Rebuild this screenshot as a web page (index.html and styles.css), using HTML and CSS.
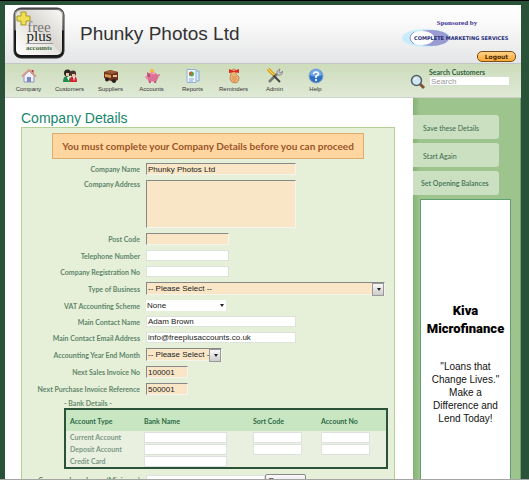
FILE: index.html
```html
<!DOCTYPE html>
<html lang="en">
<head>
<meta charset="utf-8">
<title>Phunky Photos Ltd - Company Details</title>
<link rel="stylesheet" href="styles.css">
</head>
<body>
<div class="page">
  <header class="header">
    <svg class="logo" viewBox="0 0 52 52" role="img" aria-label="free plus accounts">
      <defs>
        <linearGradient id="rim" x1="0" y1="0" x2="0" y2="1"><stop offset="0" stop-color="#555"/><stop offset=".1" stop-color="#aaa"/><stop offset=".44" stop-color="#777"/><stop offset=".46" stop-color="#111"/><stop offset="1" stop-color="#1a1a1a"/></linearGradient>
        <linearGradient id="face" x1="0" y1="1" x2="1" y2="0"><stop offset="0" stop-color="#fff"/><stop offset=".5" stop-color="#e6e4df"/><stop offset=".52" stop-color="#d8d5cf"/><stop offset="1" stop-color="#f8f8f6"/></linearGradient>
      </defs>
      <rect x="1" y="1" width="50" height="50" rx="7" fill="url(#rim)" stroke="#333"/>
      <rect x="3" y="3" width="46" height="45" rx="5" fill="url(#face)"/>
      <path d="M8 5h5v4h4v5h-4v4H8v-4H4V9h4z" fill="#f0df55" stroke="#a89a28"/>
      <text x="26" y="25" text-anchor="middle" font-size="15" fill="#777">free</text>
      <text x="26" y="34" text-anchor="middle" font-size="15" fill="#222">plus</text>
      <path d="M13 36.500h27" stroke="#999"/>
      <text x="26" y="43" text-anchor="middle" font-size="7" font-weight="bold" fill="#3f6a3a">accounts</text>
    </svg>
    <h1 class="company">Phunky Photos Ltd</h1>
    <div class="sponsor">
      <p class="sponsored">Sponsored by</p>
      <svg class="cms" viewBox="0 0 114 20" role="img" aria-label="Complete Marketing Services">
        <ellipse cx="24" cy="10" rx="24" ry="9" fill="#c9ecfb"/>
        <ellipse cx="29" cy="10" rx="18" ry="8" fill="#9a9bd0"/>
        <ellipse cx="20" cy="10" rx="12" ry="7" fill="#fff"/>
        <path d="M12 4q-8 6 0 12" fill="none" stroke="#8f92cc"/>
        <text x="12" y="12" font-size="5" font-weight="900" fill="#1f2c77">COMPLETE MARKETING SERVICES</text>
      </svg>
      <button class="logout" type="button">Logout</button>
    </div>
  </header>

  <div class="toolbar">
    <nav class="nav">
      <a href="#"><svg viewBox="0 0 16 16"><path d="M10.500 2h2v4h-2z" fill="#a33"/><path d="M3 7.500 8 3l5 4.500V14H3z" fill="#eef0fb" stroke="#8e95c2"/><path d="M1 8.500 8 2l7 6.500" fill="none" stroke="#d79a86" stroke-width="1.800"/><path d="M6 9h4v5H6z" fill="#7d86c0"/></svg>Company</a>
      <a href="#"><svg viewBox="0 0 16 16"><path d="M1 14q0-6 4-6t5 6z" fill="#218a4c"/><path d="M8 14q0-6 3.500-6T15 14z" fill="#d5202b"/><circle cx="5.500" cy="5" r="3.500" fill="#2a2520"/><circle cx="11" cy="5.500" r="3" fill="#4a3328"/><path d="M4 5h3v3H4zm6 1h3v3h-3z" fill="#efc5a6"/><path d="m5 9 1.500 4L8 8zM11 9l1 4 1-4z" fill="#fff"/></svg>Customers</a>
      <a href="#"><svg viewBox="0 0 16 16"><path d="m1 4 6-2 8 2v8l-5 2-9-4z" fill="#6c3420"/><path d="m1 4 6-2 8 2-6 2z" fill="#9c5a35"/><path d="m2 6 6 1v3L2 9z" fill="#d7934f"/><path d="M10 7h4v2h-4z" fill="#e5bd8b"/><circle cx="4" cy="11.500" r="2" fill="#26201d"/><circle cx="11" cy="13" r="2" fill="#26201d"/></svg>Suppliers</a>
      <a href="#"><svg viewBox="0 0 16 16"><circle cx="8" cy="3" r="2" fill="#f4b83c"/><path d="M4 11h3v4H5zm6 0h3l-1 4h-2z" fill="#c9577f"/><ellipse cx="8.500" cy="9" rx="6" ry="4.500" fill="#dc7195"/><path d="m3 4 3 2-3 3z" fill="#c9577f"/><path d="M1 8h3v3H2z" fill="#e58aaa"/><path d="M7 6q2-1 4 0" fill="none" stroke="#f5b5ca"/><path d="M14 8q2 0 1-2" fill="none" stroke="#c9577f"/><circle cx="5" cy="8" r=".7" fill="#512"/></svg>Accounts</a>
      <a href="#"><svg viewBox="0 0 16 16"><path d="M9 3h5v10H9z" fill="#d8e8fa" stroke="#7fa8d8"/><path d="M2 1.500h9v13H2z" fill="#edf4fc" stroke="#8fb2d8"/><circle cx="6.500" cy="6" r="2.500" fill="#57a948"/><path d="M6.500 6V3.500A2.500 2.500 0 0 0 4.200 7z" fill="#e04a38"/><path d="M4 11h5M4 13h4" stroke="#8ba9c8"/></svg>Reports</a>
      <a href="#"><svg viewBox="0 0 16 16"><path d="M5 5q0-4 3-4t2 5l3 3q0 6-4 6t-5-4z" fill="#eeb273" stroke="#b8733b" stroke-width=".7"/><path d="m3 1 5 2 5-2v4L8 4 3 5z" fill="#d92b22"/><path d="M6 9h5M6 11h5M7 13h3" stroke="#c88349" stroke-width=".7"/></svg>Reminders</a>
      <a href="#"><svg viewBox="0 0 16 16"><path d="m2 14 8-8" stroke="#777" stroke-width="2.500"/><path d="M10 6q-1-4 3-5l-1 3 2 1 1.500-2Q16 8 11 7z" fill="#c8cbd0" stroke="#666" stroke-width=".6"/><path d="m6 7 7 7" stroke="#444" stroke-width="2"/><path d="m1 1 6 6" stroke="#dca622" stroke-width="3.500"/><path d="m1.500 1.500 5 5" stroke="#ffe063"/></svg>Admin</a>
      <a href="#"><svg viewBox="0 0 16 16"><circle cx="8" cy="8" r="7" fill="#2e72c8" stroke="#8aa4c8"/><path d="M2 7a6 6 0 0 1 12 0q-6 3-12 0z" fill="#72a8e6"/><path d="M5.500 6.200Q5.800 4 8 4t2.500 2Q10.500 7 8 8.300V10M8 11v2" fill="none" stroke="#fff" stroke-width="1.700"/></svg>Help</a>
    </nav>
    <form class="search">
      <svg viewBox="0 0 16 16"><path d="m10 10 4 4" stroke="#855334" stroke-width="3"/><circle cx="6.500" cy="6.500" r="5" fill="#cfe6f4" stroke="#555e68" stroke-width="1.500"/><path d="M4 6q.5-2 3-2" fill="none" stroke="#fff"/></svg>
      <div class="search-box">
        <label for="search">Search Customers</label>
        <input id="search" type="text" placeholder="Search">
      </div>
    </form>
  </div>

  <div class="columns">
    <main class="content">
      <h2 class="title">Company Details</h2>
      <form class="panel">
        <p class="warning">You must complete your Company Details before you can proceed</p>
        <div class="row"><label for="name">Company Name</label><input class="required wide" id="name" type="text" value="Phunky Photos Ltd"></div>
        <div class="row top"><label for="address">Company Address</label><textarea class="required wide" id="address"></textarea></div>
        <div class="row"><label for="postcode">Post Code</label><input class="required" id="postcode" type="text"></div>
        <div class="row"><label for="phone">Telephone Number</label><input id="phone" type="text"></div>
        <div class="row"><label for="reg">Company Registration No</label><input id="reg" type="text"></div>
        <div class="row"><label for="type">Type of Business</label><span class="pick boxed full"><select class="required" id="type"><option>-- Please Select --</option></select></span></div>
        <div class="row"><label for="vat">VAT Accounting Scheme</label><span class="pick"><select id="vat"><option>None</option></select></span></div>
        <div class="row"><label for="contact">Main Contact Name</label><input class="wide" id="contact" type="text" value="Adam Brown"></div>
        <div class="row"><label for="email">Main Contact Email Address</label><input class="wide" id="email" type="text" value="info@freeplusaccounts.co.uk"></div>
        <div class="row"><label for="month">Accounting Year End Month</label><span class="pick boxed"><select class="required" id="month"><option>-- Please Select --</option></select></span></div>
        <div class="row"><label for="sales">Next Sales Invoice No</label><input class="required short" id="sales" type="text" value="100001"></div>
        <div class="row"><label for="purchase">Next Purchase Invoice Reference</label><input class="required short" id="purchase" type="text" value="500001"></div>
        <table class="bank">
          <caption>- Bank Details -</caption>
          <thead>
            <tr><th>Account Type</th><th>Bank Name</th><th>Sort Code</th><th>Account No</th></tr>
          </thead>
          <tbody>
            <tr><td>Current Account</td><td><input type="text" aria-label="Current account bank name"></td><td><input class="code" type="text" aria-label="Current account sort code"></td><td><input class="code" type="text" aria-label="Current account number"></td></tr>
            <tr><td>Deposit Account</td><td><input type="text" aria-label="Deposit account bank name"></td><td><input class="code" type="text" aria-label="Deposit account sort code"></td><td><input class="code" type="text" aria-label="Deposit account number"></td></tr>
            <tr><td>Credit Card</td><td><input type="text" aria-label="Credit card bank name"></td><td></td><td></td></tr>
          </tbody>
        </table>
        <div class="row"><label for="logo">Company Logo Image (Minimum)</label><input class="file" id="logo" type="text"><button class="browse" type="button">Browse...</button></div>
      </form>
    </main>
    <aside class="sidebar">
      <button type="button">Save these Details</button>
      <button type="button">Start Again</button>
      <button class="strong" type="button">Set Opening Balances</button>
      <section class="ad">
        <h3>Kiva Microfinance</h3>
        <p>"Loans that Change Lives." Make a Difference and Lend Today!</p>
      </section>
    </aside>
  </div>
</div>
</body>
</html>
```
FILE: styles.css
```css
* { box-sizing: border-box; }

html { height: 100%; }

body {
  height: 100%;
  margin: 0;
  padding: 4px 8px 0 5px;
  overflow: hidden;
  background: #2a5239;
  border-top: 1px solid #000;
  border-bottom: 1px solid #a5a5a5;
  font-family: "Liberation Sans", Arial, sans-serif;
  font-size: 8px;
}

h1, h2, h3, p { margin: 0; font-weight: normal; }

input, textarea, select, button {
  margin: 0;
  font-family: inherit;
  font-size: 8px;
  color: #222;
}

.page { background: #fff; }

.header {
  display: flex;
  align-items: flex-start;
  height: 59px;
  padding: 2px 5px 0 8px;
  background: linear-gradient(#fff, #fafafa 30%, #e4e5e6);
  border-bottom: 1px solid #c4c8c4;
}

.logo { width: 52px; height: 52px; font-family: "Liberation Serif", serif; }

.company {
  flex: 1;
  padding: 15px 0 0 15px;
  font-size: 19px;
  line-height: 24px;
  color: #333;
}

.sponsor {
  display: flex;
  flex-direction: column;
  align-items: flex-end;
  padding-top: 12px;
}

.sponsored {
  width: 114px;
  padding-right: 4px;
  font-family: "Liberation Serif", serif;
  font-size: 7px;
  line-height: 9px;
  font-weight: bold;
  text-align: center;
  color: #3a3094;
}

.cms { width: 114px; height: 20px; font-family: "DejaVu Sans", sans-serif; }

.logout {
  width: 39px;
  height: 11px;
  margin-top: 3px;
  padding: 0;
  border: 1px solid #7b4d18;
  border-radius: 5px;
  background: linear-gradient(#ffd287, #fba932);
  font-family: "DejaVu Sans", sans-serif;
  font-size: 6px;
  line-height: 8px;
  font-weight: bold;
  color: #4c2c08;
}

.toolbar {
  display: flex;
  justify-content: space-between;
  height: 34px;
  padding: 4px 11px 0 3px;
  background: linear-gradient(#cddcbb, #dfe9d6);
  border-bottom: 1px solid #ccd0ca;
}

.nav { display: flex; }

.nav a {
  display: flex;
  flex-direction: column;
  align-items: center;
  width: 41px;
  font-size: 6px;
  line-height: 8px;
  color: #333;
  text-decoration: none;
}

.nav svg { width: 16px; height: 16px; margin-bottom: 1px; }

.search { display: flex; gap: 3px; }

.search svg { width: 16px; height: 16px; margin-top: 6px; }

.search-box { display: flex; flex-direction: column; }

.search label {
  font-family: Lato, sans-serif;
  font-size: 7px;
  line-height: 8px;
  font-weight: bold;
  color: #2f6241;
}

.search input {
  width: 81px;
  height: 10px;
  padding: 0 1px;
  border: 1px solid #d7ded2;
}

.search input::placeholder { color: #999; }

.columns { display: flex; }

.content { flex: 1; min-width: 0; padding: 11px 18px 20px 16px; }

.title { font-size: 14px; line-height: 18px; color: #16866b; }

.panel {
  display: flex;
  flex-direction: column;
  gap: 5px;
  padding: 5px 6px 20px;
  background: #e6f0d8;
  border: 1px solid #b4cf93;
}

.warning {
  margin: 0 24px -1px;
  border: 1px solid #e0ad6c;
  background: #ffd5a0;
  font-family: Lato, sans-serif;
  font-size: 10px;
  line-height: 24px;
  font-weight: bold;
  text-align: center;
  white-space: nowrap;
  color: #9a5528;
}

.row {
  display: grid;
  grid-template-columns: 112px auto auto;
  justify-content: start;
  align-items: center;
  column-gap: 6px;
}

.row.top { align-items: start; }

.row label {
  font-family: Lato, sans-serif;
  font-size: 7px;
  line-height: 8px;
  font-weight: bold;
  text-align: right;
  white-space: nowrap;
  color: #5f866b;
}

.panel input {
  width: 83px;
  height: 11px;
  padding: 0 1px;
  border: 1px solid #dde3dc;
  background: #fff;
}

.panel .wide { width: 150px; }

.panel .short { width: 42px; }

.panel .required {
  height: 12px;
  border: 1px solid;
  border-color: #888 #f6f4ee #f6f4ee #888;
  background: #f8e6c6;
}

.panel textarea.required { display: block; height: 48px; resize: none; }

.pick { position: relative; width: 80px; height: 11px; }

.pick.boxed { width: 76px; height: 13px; }

.pick.full { width: 239px; }

.pick select {
  display: block;
  width: 100%;
  height: 100%;
  padding: 0 1px;
  border: 0;
  border-radius: 0;
  background: #fff;
  appearance: none;
}

.pick .required { height: 100%; }

.pick::after {
  content: "";
  position: absolute;
  top: 4px;
  right: 2px;
  border: 2px solid transparent;
  border-top: 3px solid #222;
  pointer-events: none;
}

.pick.boxed::before {
  content: "";
  position: absolute;
  top: 1px;
  right: 1px;
  width: 10px;
  height: 11px;
  border: 1px solid #999;
  background: linear-gradient(#f8f8f8, #ccc);
  pointer-events: none;
}

.pick.boxed::after { top: 6px; right: 4px; }

.bank {
  align-self: flex-start;
  width: 324px;
  margin-left: 36px;
  border: 2px solid #2a5239;
  border-collapse: separate;
  border-spacing: 0;
  table-layout: fixed;
  background: #e9f0e0;
  font-family: Lato, sans-serif;
  font-size: 7px;
  line-height: 8px;
  font-weight: bold;
  color: #7b9985;
}

.bank caption { margin-top: -1px; padding-bottom: 1px; text-align: left; color: #668b72; }

.bank th {
  height: 21px;
  padding: 0 0 0 4px;
  background: #c7e6c1;
  text-align: left;
  color: #2f6a45;
}

.bank th:nth-child(1) { width: 74px; }
.bank th:nth-child(2) { width: 109px; }
.bank th:nth-child(3) { width: 68px; }

.bank td { height: 12px; padding: 0 0 0 4px; }

.bank input { display: block; }

.bank .code { width: 49px; }

.panel .file { width: 119px; }

.browse {
  width: 41px;
  height: 12px;
  margin-left: -6px;
  padding: 0;
  border: 1px solid #888;
  border-radius: 2px;
  background: linear-gradient(#fafafa, #ddd);
}

.sidebar {
  display: flex;
  flex: none;
  flex-direction: column;
  align-items: flex-start;
  gap: 4px;
  width: 108px;
  padding: 17px 9px 0 0;
  background: linear-gradient(90deg, #86b177, #9dc48d 7px);
  border-right: 1px solid #70a070;
}

.sidebar button {
  width: 86px;
  height: 24px;
  padding: 2px 0 0 10px;
  border: 0;
  border-radius: 0 3px 3px 0;
  background: #cbe0c1;
  font-family: Lato, sans-serif;
  font-size: 7px;
  text-align: left;
  white-space: nowrap;
  color: #3c694d;
}

.sidebar .strong { padding: 0 0 0 8px; font-weight: bold; color: #4f7d60; }

.ad {
  flex: 1;
  align-self: stretch;
  margin-left: 7px;
  padding: 102px 4px 0;
  background: #fff;
  border: 1px solid #5fa070;
  text-align: center;
  color: #111;
}

.ad h3 {
  margin-bottom: 22px;
  font-family: Roboto, sans-serif;
  font-size: 13px;
  line-height: 18px;
  font-weight: 900;
  color: #000;
}

.ad p { padding: 0 4px; font-size: 10px; line-height: 13px; }
```
